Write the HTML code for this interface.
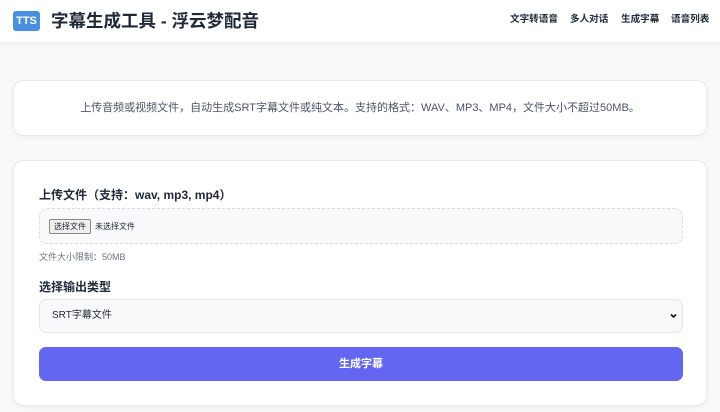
<!DOCTYPE html>
<html><head><meta charset="utf-8"><style>
*{box-sizing:border-box;margin:0;padding:0}
body{width:720px;height:412px;overflow:hidden;background:#f8f9fb;font-family:"Liberation Sans","Noto Sans CJK SC",sans-serif;color:#1f2937;position:relative}
.hdr{position:absolute;left:0;top:0;width:720px;height:42px;background:#fff;box-shadow:0 2px 6px rgba(0,0,0,.06)}
.logo{position:absolute;left:13px;top:11px;width:27px;height:20px;background:#4a90e2;border-radius:3px;color:#fff;font-size:11px;font-weight:bold;text-align:center;line-height:20px}
.title{position:absolute;left:51px;top:9px;font-size:17.5px;font-weight:bold;color:#1f2937;line-height:24px}
.nav{position:absolute;top:13px;font-size:9.6px;font-weight:bold;color:#1f2937;line-height:14px}
.card{position:absolute;left:13px;width:694px;background:#fff;border:1px solid #e8e9ec;border-radius:10px;box-shadow:0 2px 6px rgba(0,0,0,.04)}
.info{top:80px;height:56px;text-align:center;font-size:11px;color:#4b5563;line-height:54px}
.main{top:160px;height:246px}
.lbl{position:absolute;left:25px;font-size:12px;font-weight:bold;color:#1f2937}
.file{position:absolute;left:25px;top:47px;width:644px;height:36px;border:1px dashed #d8dbe0;border-radius:8px;background:#f8f9fb}
.btnf{position:absolute;left:9px;top:10px;height:15px;padding:0 4px;border:1px solid #888;background:#efefef;font-size:8px;line-height:13px;border-radius:2px}
.nf{position:absolute;left:55px;top:12px;font-size:8px}
.hint{position:absolute;left:25px;top:89px;font-size:9px;color:#6b7280}
.sel{position:absolute;left:25px;top:138px;width:644px;height:34px;border:1px solid #e5e7eb;border-radius:7px;background:#f8f9fb;font-size:10px;line-height:32px;padding-left:12px}
.go{position:absolute;left:25px;top:186px;width:644px;height:34px;border-radius:7px;background:#6366f1;color:#fff;font-size:11px;font-weight:bold;text-align:center;line-height:34px}
</style></head><body>
<div class="hdr">
<div class="logo">TTS</div>
<div class="title">字幕生成工具 - 浮云梦配音</div>
<div class="nav" style="left:510px">文字转语音</div>
<div class="nav" style="left:570px">多人对话</div>
<div class="nav" style="left:621px">生成字幕</div>
<div class="nav" style="left:671px">语音列表</div>
</div>
<div class="card info">上传音频或视频文件，自动生成SRT字幕文件或纯文本。支持的格式：WAV、MP3、MP4，文件大小不超过50MB。</div>
<div class="card main">
<div class="lbl" style="top:25px">上传文件（支持：wav, mp3, mp4）</div>
<div class="file"><span class="btnf">选择文件</span><span class="nf">未选择文件</span></div>
<div class="hint">文件大小限制：50MB</div>
<div class="lbl" style="top:117px">选择输出类型</div>
<div class="sel">SRT字幕文件<svg style="position:absolute;right:5px;top:13px" width="7" height="6" viewBox="0 0 7 6"><path d="M1 1.5L3.5 4 6 1.5" stroke="#111" stroke-width="1.6" fill="none"/></svg></div>
<div class="go">生成字幕</div>
</div>
</body></html>
